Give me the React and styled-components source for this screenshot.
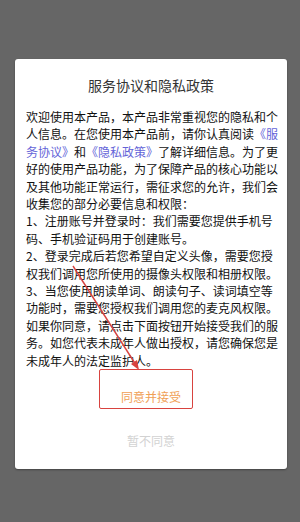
import React from 'react';
import styled, { createGlobalStyle } from 'styled-components';

const GlobalStyle = createGlobalStyle`
    html, body {
        margin: 0;
        padding: 0;
        background: #666666;
    }
    body {
        font-family: "Noto Sans CJK SC", "Noto Sans", sans-serif;
    }
`

function App() {
    return (
        <Page>
            <GlobalStyle />
            <Card>
                <Title>服务协议和隐私政策</Title>
                <Body>
                    <p>
                        欢迎使用本产品，本产品非常重视您的隐私和个人信息。在您使用本产品前，请你认真阅读
                        <Link>《服务协议》</Link>和<Link>《隐私政策》</Link>
                        了解详细信息。为了更好的使用产品功能，为了保障产品的核心功能以及其他功能正常运行，需征求您的允许，我们会收集您的部分必要信息和权限：
                    </p>
                    <p>1、注册账号并登录时：我们需要您提供手机号码、手机验证码用于创建账号。</p>
                    <p>2、登录完成后若您希望自定义头像，需要您授权我们调用您所使用的摄像头权限和相册权限。</p>
                    <p>3、当您使用朗读单词、朗读句子、读词填空等功能时，需要您授权我们调用您的麦克风权限。</p>
                    <p>如果你同意，请点击下面按钮开始接受我们的服务。如您代表未成年人做出授权，请您确保您是未成年人的法定监护人。</p>
                </Body>
                <Actions>
                    <ActionButton $tone="accept">
                        同意并接受
                        <MarkBox />
                    </ActionButton>
                    <ActionButton $tone="refuse">暂不同意</ActionButton>
                </Actions>
            </Card>
            <Arrow width="300" height="522" viewBox="0 0 300 522">
                <line x1="73" y1="266" x2="136" y2="365" stroke="#d8433f" strokeWidth="1.4" />
                <polygon points="139,370 131,364 137,360" fill="#d8433f" />
            </Arrow>
        </Page>
    );
}

export default App;

const Page = styled.div`
    position: relative;
    width: 300px;
    height: 522px;
    padding-top: 59px;
    box-sizing: border-box;
    overflow: hidden;
`

const Card = styled.div`
    margin-left: 15px;
    width: 272px;
    background: #ffffff;
    border-radius: 3px;
    box-shadow: 0 1px 2px rgba(0, 0, 0, 0.35);
    padding: 16px 0 7px;
    box-sizing: border-box;
`

const Title = styled.h1`
    margin: 0;
    font-size: 14px;
    line-height: 20px;
    font-weight: 400;
    color: #333333;
    text-align: center;
`

const Body = styled.div`
    margin-top: 13px;
    padding: 0 8px 0 11px;
    font-size: 12px;
    line-height: 17.4px;
    color: #111111;
    line-break: anywhere;

    p {
        margin: 0;
    }
`

const Link = styled.span`
    color: #6464d8;
`

const Actions = styled.div`
    margin-top: 5px;
    display: flex;
    flex-direction: column;
`

const ActionButton = styled.div`
    position: relative;
    height: 44px;
    display: flex;
    align-items: center;
    justify-content: center;
    font-size: 12px;
    color: ${props => props.$tone === 'accept' ? '#f0a055' : '#d2d2d2'};
`

const MarkBox = styled.span`
    position: absolute;
    left: 84px;
    top: -5px;
    width: 94px;
    height: 40px;
    border: 1.4px solid #d8433f;
    border-radius: 2px;
    box-sizing: border-box;
`

const Arrow = styled.svg`
    position: absolute;
    left: 0;
    top: 0;
    pointer-events: none;
`
